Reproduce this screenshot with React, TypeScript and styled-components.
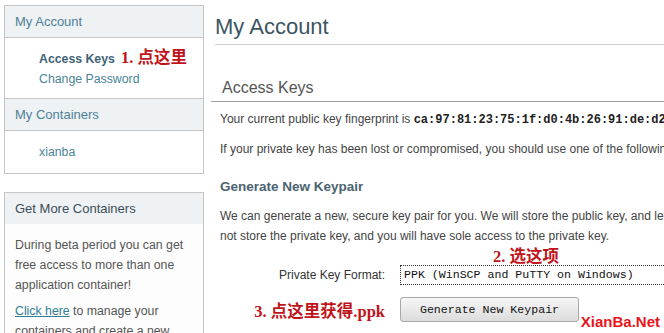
import React from "react";
import styled, { createGlobalStyle } from "styled-components";

const Global = createGlobalStyle`
  html, body { margin: 0; padding: 0; background: #fff; }
  body {
    width: 664px; height: 333px; overflow: hidden;
    font-family: "Liberation Sans", Arial, sans-serif;
    font-size: 12px; color: #444;
  }
`;

const Page = styled.div`
  position: relative;
  display: flex;
  width: 664px;
  height: 333px;
  overflow: hidden;
`;

const Sidebar = styled.aside`
  flex: 0 0 200px;
  margin-left: 4px;
  padding-top: 5px;
  display: flex;
  flex-direction: column;
  gap: 18px;
`;

const Box = styled.div`
  border: 1px solid #c6c6c6;
  background: #fff;
`;

const BoxHeader = styled.div<{ $dark?: boolean; $noBorder?: boolean }>`
  height: 31px;
  line-height: 31px;
  padding-left: 10px;
  background: #eef2f4;
  font-size: 13px;
  color: ${(p) => (p.$dark ? "#3e4d57" : "#4d8196")};
  border-bottom: ${(p) => (p.$noBorder ? "none" : "1px solid #c6c6c6")};
`;

const ItemList = styled.ul<{ $last?: boolean }>`
  list-style: none;
  margin: 0;
  padding: ${(p) => (p.$last ? "11px 0 11px 34px" : "10px 0 9px 34px")};
  border-bottom: ${(p) => (p.$last ? "none" : "1px solid #c6c6c6")};
`;

const Item = styled.li<{ $active?: boolean }>`
  line-height: 20px;
  font-size: 12.3px;
  color: ${(p) => (p.$active ? "#3d6275" : "#4a8599")};
  font-weight: ${(p) => (p.$active ? "bold" : "normal")};
  white-space: nowrap;
`;

const Note = styled.span`
  font-family: "Liberation Serif", "Noto Sans CJK SC", serif;
  font-weight: bold;
  color: #c0141b;
  font-size: 16.5px;
  white-space: nowrap;
`;

const Inline = styled.span`
  margin-left: 6px;
`;

const BoxBody = styled.div`
  padding: 11px 10px 0 10px;
  background: #fdfdfd;
`;

const SideText = styled.p`
  margin: 0 0 6px 0;
  line-height: 20px;
  font-size: 12.3px;
  color: #555;
`;

const Link = styled.a`
  color: #2f7e94;
  text-decoration: underline;
`;

const Main = styled.main`
  flex: 1 1 auto;
  min-width: 0;
  margin-left: 7px;
  overflow: hidden;
`;

const Title = styled.h1`
  margin: 0 0 0 4px;
  padding: 14px 0 4px 0;
  font-size: 22px;
  line-height: 26px;
  font-weight: normal;
  color: #3a5562;
  border-bottom: 1px solid #d0d0d0;
`;

const SectionTitle = styled.h2`
  margin: 33px 0 0 0;
  padding: 0 0 3px 11px;
  font-size: 16px;
  line-height: 20px;
  font-weight: normal;
  color: #555;
  border-bottom: 1px solid #a0a0a0;
`;

const Content = styled.div`
  padding-left: 9px;
`;

const Para = styled.p<{ $top?: number }>`
  margin: ${(p) => p.$top ?? 9}px 0 0 0;
  line-height: 20px;
  font-size: 12px;
  color: #444;
  white-space: nowrap;
`;

const Mono = styled.code`
  font-family: "Liberation Mono", "Courier New", monospace;
  font-weight: bold;
  font-size: 12px;
  color: #222;
`;

const SubTitle = styled.h3`
  margin: 18px 0 0 0;
  font-size: 13.5px;
  line-height: 20px;
  font-weight: bold;
  color: #4a6370;
`;

const Form = styled.div`
  position: relative;
  margin-top: 19px;
  display: grid;
  grid-template-columns: 165px 1fr;
  column-gap: 15px;
  row-gap: 12px;
  align-items: center;
`;

const Label = styled.label`
  text-align: right;
  font-size: 12px;
  color: #333;
  white-space: nowrap;
`;

const Select = styled.div`
  box-sizing: border-box;
  width: 320px;
  height: 20px;
  line-height: 18px;
  padding-left: 3px;
  border: 1px dotted #333;
  font-family: "Liberation Mono", "Courier New", monospace;
  font-size: 11.6px;
  color: #111;
  white-space: nowrap;
`;

const Button = styled.button`
  box-sizing: border-box;
  width: 179px;
  height: 25px;
  padding: 0;
  border: 1px solid #a8a8a8;
  border-radius: 3px;
  background: linear-gradient(#f6f6f6, #dcdcdc);
  font-family: "Liberation Mono", "Courier New", monospace;
  font-size: 11.6px;
  color: #111;
  justify-self: start;
`;

const FloatNote = styled.div`
  position: absolute;
  left: 273px;
  top: -22px;
`;

const Watermark = styled.div`
  position: absolute;
  right: 4px;
  bottom: 3px;
  font-family: "Liberation Sans", Arial, sans-serif;
  font-weight: bold;
  font-size: 15px;
  color: #e8141c;
`;

export default function App() {
  return (
    <>
      <Global />
      <Page>
        <Sidebar>
          <Box>
            <BoxHeader>My Account</BoxHeader>
            <ItemList>
              <Item $active>
                Access Keys
                <Inline>
                  <Note>1. 点这里</Note>
                </Inline>
              </Item>
              <Item>Change Password</Item>
            </ItemList>
            <BoxHeader>My Containers</BoxHeader>
            <ItemList $last>
              <Item>xianba</Item>
            </ItemList>
          </Box>
          <Box>
            <BoxHeader $dark $noBorder>
              Get More Containers
            </BoxHeader>
            <BoxBody>
              <SideText>
                During beta period you can get free access to more than one
                application container!
              </SideText>
              <SideText>
                <Link href="#">Click here</Link> to manage your containers and
                create a new one.
              </SideText>
            </BoxBody>
          </Box>
        </Sidebar>
        <Main>
          <Title>My Account</Title>
          <SectionTitle>Access Keys</SectionTitle>
          <Content>
            <Para $top={7}>
              Your current public key fingerprint is{" "}
              <Mono>ca:97:81:23:75:1f:d0:4b:26:91:de:d2:1a:0c</Mono>
            </Para>
            <Para>
              If your private key has been lost or compromised, you should use
              one of the following options.
            </Para>
            <SubTitle>Generate New Keypair</SubTitle>
            <Para>
              We can generate a new, secure key pair for you. We will store the
              public key, and let you download the private key. We will
              <br />
              not store the private key, and you will have sole access to the
              private key.
            </Para>
            <Form>
              <FloatNote>
                <Note>2. 选这项</Note>
              </FloatNote>
              <Label>Private Key Format:</Label>
              <Select>PPK (WinSCP and PuTTY on Windows)</Select>
              <Label>
                <Note>3. 点这里获得.ppk</Note>
              </Label>
              <Button>Generate New Keypair</Button>
            </Form>
          </Content>
        </Main>
        <Watermark>XianBa.Net</Watermark>
      </Page>
    </>
  );
}
